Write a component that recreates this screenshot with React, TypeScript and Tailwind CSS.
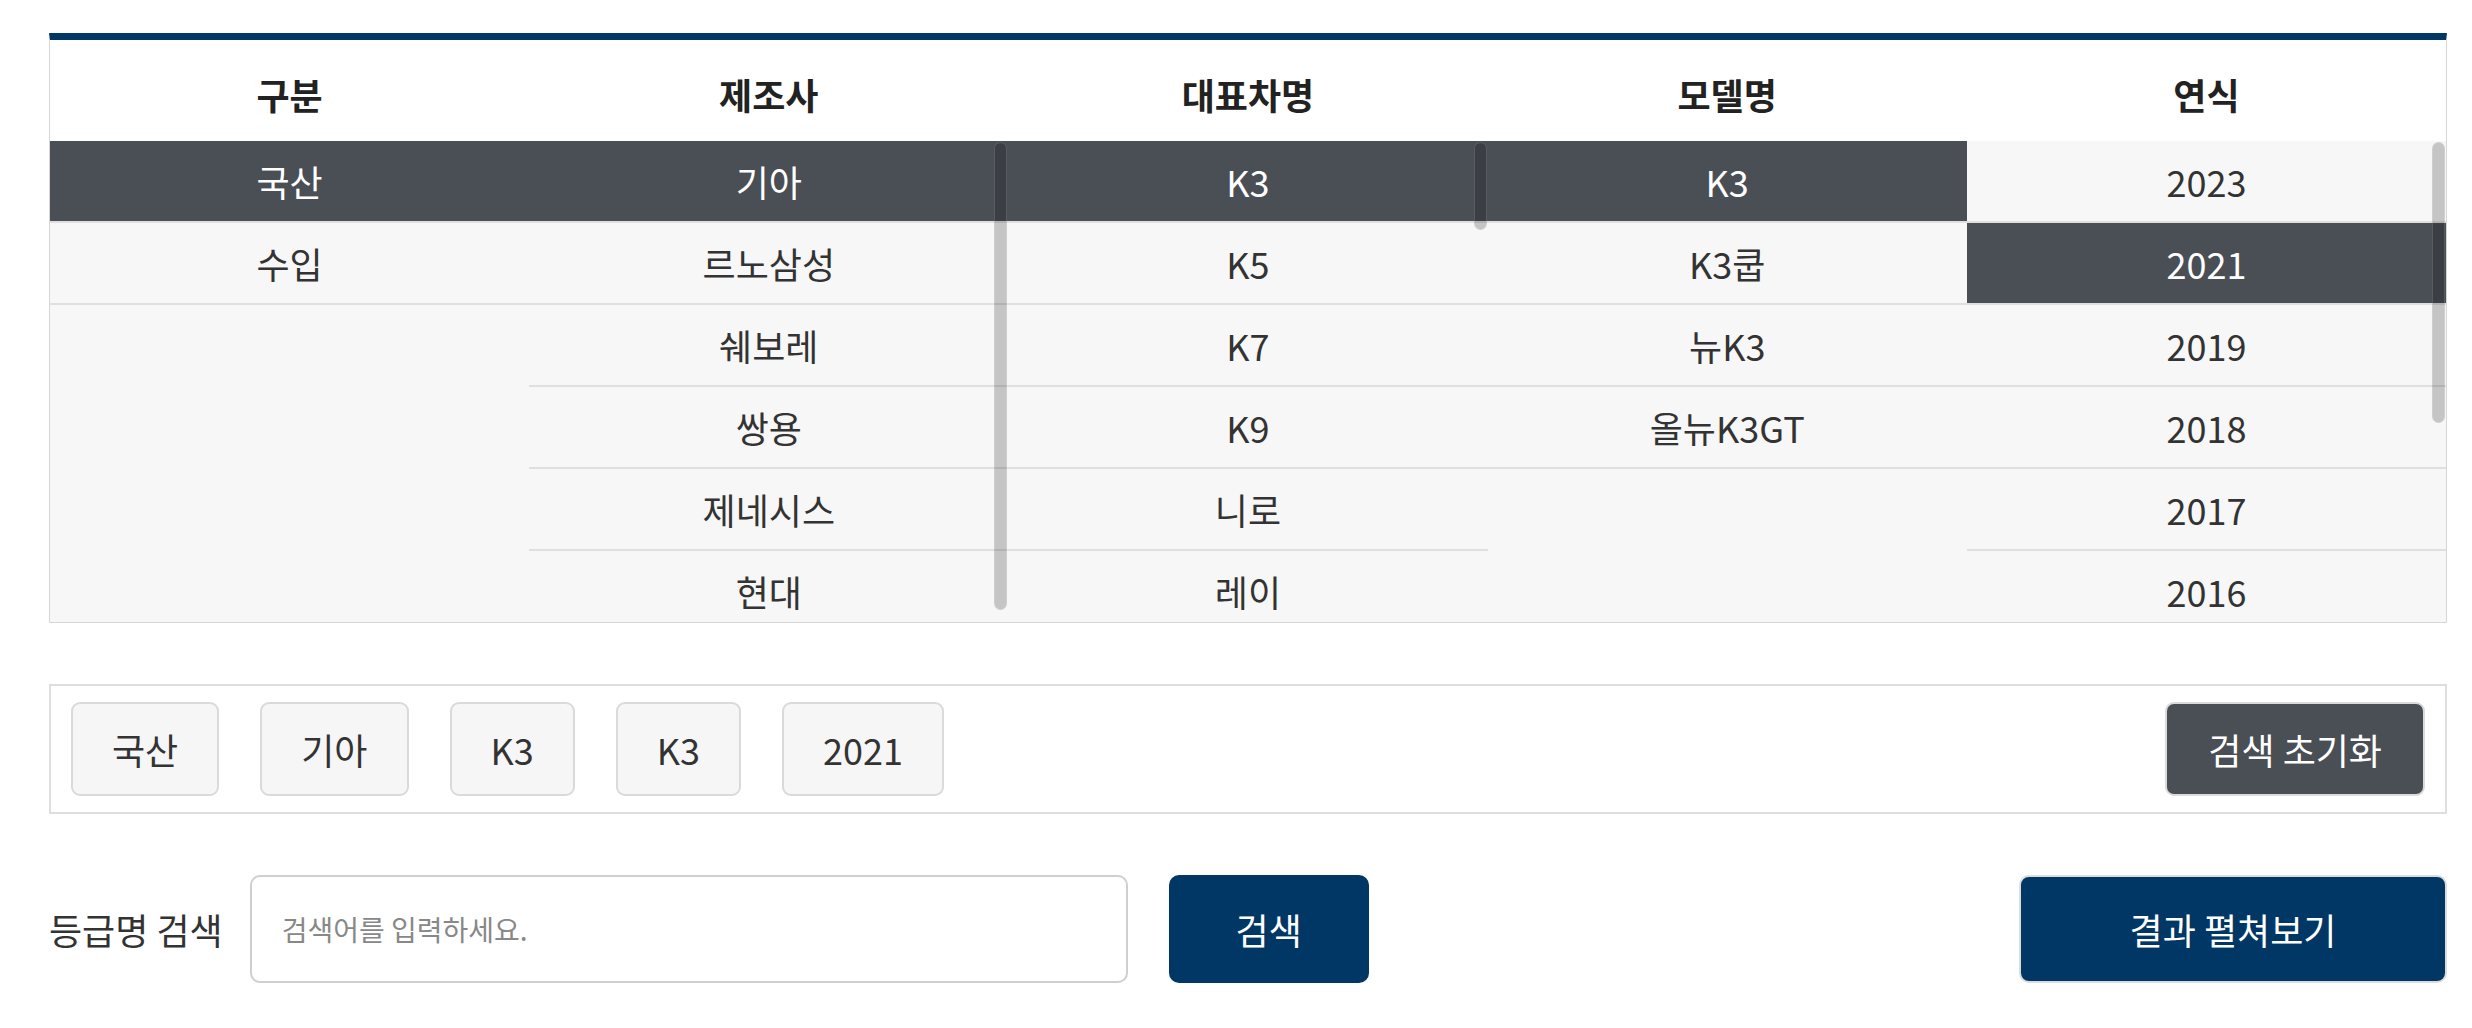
import React from "react";

type Column = {
  title: string;
  items: string[];
  selected: number;
};

const columns: Column[] = [
  { title: "구분", items: ["국산", "수입"], selected: 0 },
  { title: "제조사", items: ["기아", "르노삼성", "쉐보레", "쌍용", "제네시스", "현대"], selected: 0 },
  {
    title: "대표차명",
    items: [
      "K3", "K5", "K7", "K9", "니로", "레이", "모닝", "모하비", "봉고", "셀토스", "쏘렌토",
      "쏘울", "스토닉", "스팅어", "스포티지", "카니발", "카렌스", "EV3", "EV6", "EV9", "니로EV",
      "니로플러스", "레이EV", "쏘울EV", "포르테", "프라이드", "오피러스", "로체", "옵티마",
      "카스타", "타우너", "세피아",
    ],
    selected: 0,
  },
  { title: "모델명", items: ["K3", "K3쿱", "뉴K3", "올뉴K3GT"], selected: 0 },
  {
    title: "연식",
    items: ["2023", "2021", "2019", "2018", "2017", "2016", "2015", "2014", "2013", "2012"],
    selected: 1,
  },
];

const ROW_H = 82;
const VIEW_H = 481;

function ListColumn({ col }: { col: Column }) {
  const contentH = col.items.length * ROW_H;
  const track = VIEW_H - 2;
  const thumbH = contentH > VIEW_H ? Math.round((track * VIEW_H) / contentH) : 0;

  return (
    <div className="relative h-[481px] overflow-hidden">
      <ul>
        {col.items.map((item, i) => (
          <li
            key={item + i}
            className={
              i === col.selected
                ? "flex h-[82px] items-center justify-center border-b-2 border-[#dfdfdf] bg-[#4a4e55] text-white"
                : "flex h-[82px] items-center justify-center border-b-2 border-[#dfdfdf] text-[#333]"
            }
          >
            {item}
          </li>
        ))}
      </ul>
      {thumbH > 0 && (
        <div
          className="absolute right-px top-px w-[13px] rounded-full border border-white/15 bg-black/20"
          style={{ height: thumbH }}
        />
      )}
    </div>
  );
}

function Chip({ label }: { label: string }) {
  return (
    <button className="h-[94px] rounded-[9px] border-2 border-[#dadada] bg-[#f6f6f6] px-[39px] text-[36px] text-[#333]">
      {label}
    </button>
  );
}

export default function App() {
  const picked = columns.map((c) => c.items[c.selected]);

  return (
    <div className="min-h-screen bg-white pl-[49px] pr-[25px] pt-[33px] font-['Noto_Sans_CJK_KR',sans-serif] text-[36px] leading-none text-[#333]">
      {/* 차량 선택 테이블 */}
      <div className="border-x border-b border-t-[7px] border-x-[#d6d6d6] border-b-[#d6d6d6] border-t-[#003764]">
        <div className="grid grid-cols-5 bg-white">
          {columns.map((c) => (
            <div key={c.title} className="flex h-[101px] items-center justify-center pt-[6px] font-bold text-[#222]">
              {c.title}
            </div>
          ))}
        </div>
        <div className="grid grid-cols-5 bg-[#f7f7f7]">
          {columns.map((c) => (
            <ListColumn key={c.title} col={c} />
          ))}
        </div>
      </div>

      {/* 선택 조건 */}
      <div className="mt-[61px] flex items-center gap-[41px] border-2 border-[#dedede] px-[20px] py-[16px]">
        {picked.map((p, i) => (
          <Chip key={i} label={p} />
        ))}
        <button className="ml-auto h-[94px] rounded-[9px] border-2 border-[#dadada] bg-[#4a4e55] px-[41px] text-[36px] text-white">
          검색 초기화
        </button>
      </div>

      {/* 등급명 검색 */}
      <div className="mt-[61px] flex h-[108px] items-center">
        <span className="mr-[27px] text-[36px] text-[#333]">등급명 검색</span>
        <input
          type="text"
          placeholder="검색어를 입력하세요."
          className="h-full w-[878px] rounded-[10px] border-2 border-[#cfcfcf] px-[30px] text-[28px] outline-none placeholder:text-[#888]"
        />
        <button className="ml-[41px] h-full w-[200px] rounded-[10px] bg-[#003764] text-[36px] text-white">
          검색
        </button>
        <button className="ml-auto h-full w-[428px] rounded-[10px] border-2 border-[#dcdcdc] bg-[#003764] text-[36px] text-white">
          결과 펼쳐보기
        </button>
      </div>
    </div>
  );
}
